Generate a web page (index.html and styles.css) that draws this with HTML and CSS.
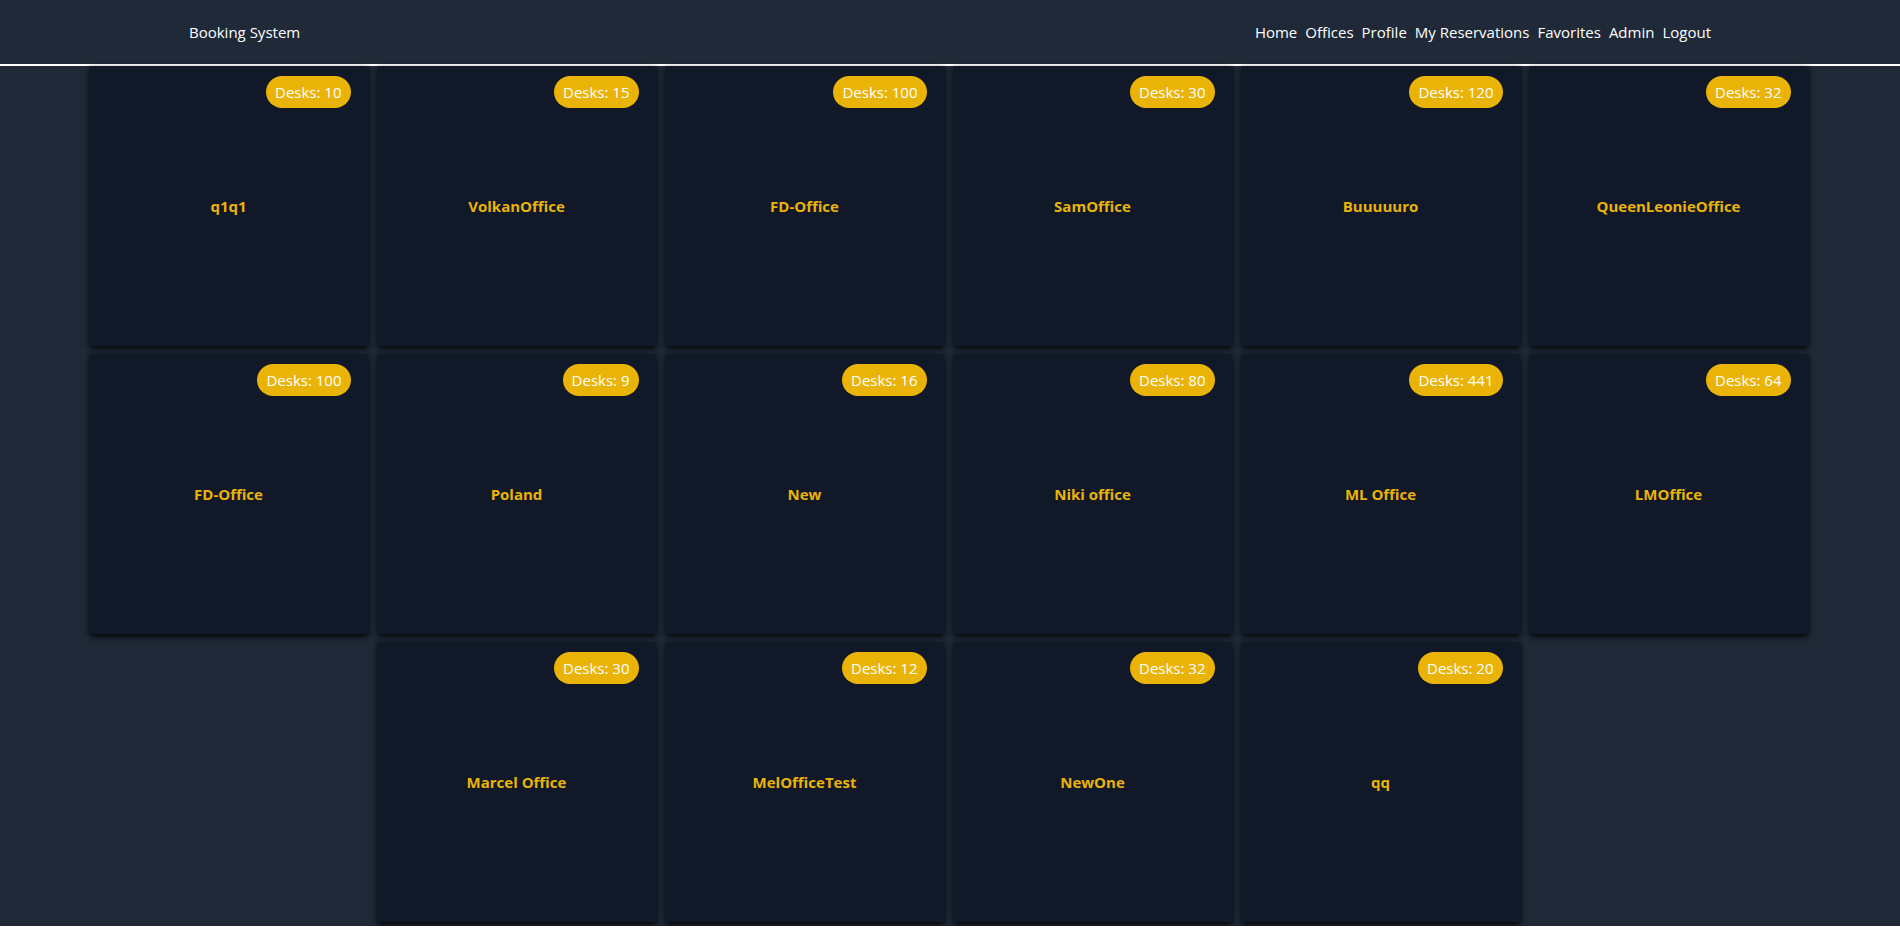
FILE: index.html
```html
<!DOCTYPE html>
<html lang="en">
<head>
<meta charset="utf-8">
<title>Booking System</title>
<link rel="stylesheet" href="styles.css">
</head>
<body>
<div class="app">
  <header class="topbar">
    <div class="topbar-inner">
      <a class="brand" href="#">Booking System</a>
      <nav class="nav">
        <a href="#">Home</a>
        <a href="#">Offices</a>
        <a href="#">Profile</a>
        <a href="#">My Reservations</a>
        <a href="#">Favorites</a>
        <a href="#">Admin</a>
        <a href="#">Logout</a>
      </nav>
    </div>
  </header>
  <main class="offices">
    <div class="card"><span class="badge">Desks: 10</span><h2 class="card-title">q1q1</h2></div>
    <div class="card"><span class="badge">Desks: 15</span><h2 class="card-title">VolkanOffice</h2></div>
    <div class="card"><span class="badge">Desks: 100</span><h2 class="card-title">FD-Office</h2></div>
    <div class="card"><span class="badge">Desks: 30</span><h2 class="card-title">SamOffice</h2></div>
    <div class="card"><span class="badge">Desks: 120</span><h2 class="card-title">Buuuuuro</h2></div>
    <div class="card"><span class="badge">Desks: 32</span><h2 class="card-title">QueenLeonieOffice</h2></div>
    <div class="card"><span class="badge">Desks: 100</span><h2 class="card-title">FD-Office</h2></div>
    <div class="card"><span class="badge">Desks: 9</span><h2 class="card-title">Poland</h2></div>
    <div class="card"><span class="badge">Desks: 16</span><h2 class="card-title">New</h2></div>
    <div class="card"><span class="badge">Desks: 80</span><h2 class="card-title">Niki office</h2></div>
    <div class="card"><span class="badge">Desks: 441</span><h2 class="card-title">ML Office</h2></div>
    <div class="card"><span class="badge">Desks: 64</span><h2 class="card-title">LMOffice</h2></div>
    <div class="card"><span class="badge">Desks: 30</span><h2 class="card-title">Marcel Office</h2></div>
    <div class="card"><span class="badge">Desks: 12</span><h2 class="card-title">MelOfficeTest</h2></div>
    <div class="card"><span class="badge">Desks: 32</span><h2 class="card-title">NewOne</h2></div>
    <div class="card"><span class="badge">Desks: 20</span><h2 class="card-title">qq</h2></div>
  </main>
</div>
</body>
</html>
```

FILE: styles.css
```css
html, body {
  margin: 0;
  padding: 0;
  background: #ffffff;
}

body {
  font-family: "Open Sans", "Noto Sans", sans-serif;
  font-size: 15px;
  line-height: 24px;
  color: #ffffff;
}

.app {
  background: #1f2937;
  padding-bottom: 4px;
}

.topbar {
  height: 64px;
  border-bottom: 2px solid #ffffff;
  display: flex;
  align-items: center;
}

.topbar-inner {
  width: 1522px;
  margin: 0 auto;
  display: flex;
  justify-content: space-between;
  align-items: center;
}

.brand {
  color: #ffffff;
  text-decoration: none;
}

.nav {
  display: flex;
  gap: 8px;
}

.nav a {
  color: #ffffff;
  text-decoration: none;
}

.offices {
  display: flex;
  flex-wrap: wrap;
  justify-content: center;
  gap: 8px;
  width: 1724px;
  padding-right: 3px;
  margin: 0 auto;
}

.card {
  position: relative;
  width: 280px;
  height: 280px;
  background: #111827;
  border-radius: 2px;
  box-shadow: 0 4px 6px -1px rgba(0, 0, 0, 0.7), 0 2px 4px -2px rgba(0, 0, 0, 0.5), 0 0 4px rgba(0, 0, 0, 0.25);
  display: flex;
  align-items: center;
  justify-content: center;
}

.badge {
  position: absolute;
  top: 10px;
  right: 18px;
  background: #eab308;
  color: #ffffff;
  border-radius: 9999px;
  padding: 4px 9px;
  line-height: 24px;
  font-size: 15px;
}

.card-title {
  margin: 0;
  font-size: 15px;
  font-weight: 700;
  line-height: 24px;
  color: #eab308;
}
```
